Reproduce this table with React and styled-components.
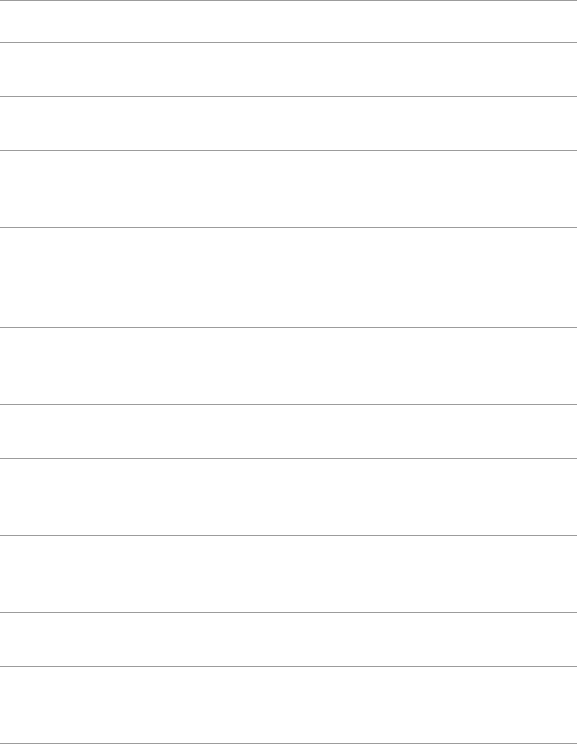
import React from "react";
import styled, { createGlobalStyle } from "styled-components";

const Global = createGlobalStyle`
  html, body { margin: 0; padding: 0; background: #ffffff; }
  body { font-family: "Liberation Sans", Arial, sans-serif; }
`;

const List = styled.div`
  display: flex;
  flex-direction: column;
  width: 100%;
  border-top: 1px solid #9c9c9c;
`;

const Row = styled.div`
  box-sizing: border-box;
  height: ${(p) => p.$h}px;
  border-bottom: 1px solid #9c9c9c;
`;

const heights = [42, 54, 54, 77, 100, 77, 54, 77, 77, 54, 77];

export default function App() {
  return (
    <>
      <Global />
      <List>
        {heights.map((h, i) => (
          <Row key={i} $h={h} />
        ))}
      </List>
    </>
  );
}
